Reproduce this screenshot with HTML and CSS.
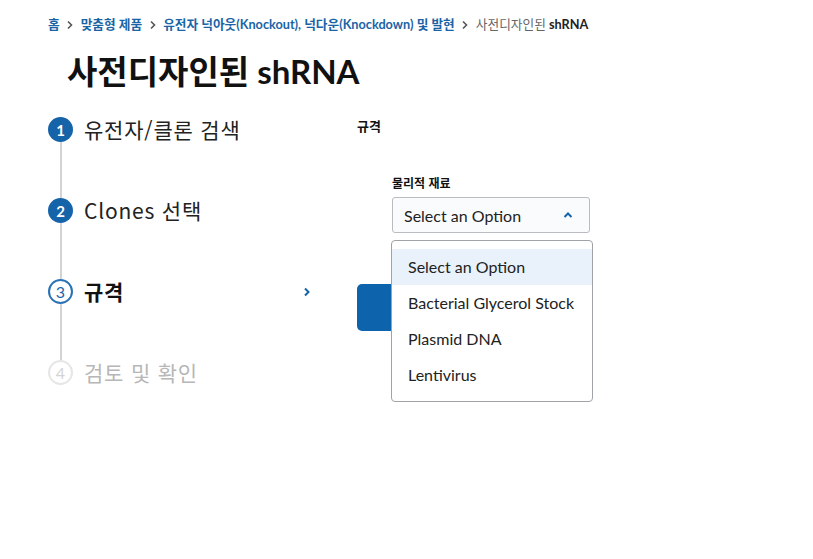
FILE: index.html
```html
<!DOCTYPE html>
<html lang="ko">
<head>
<meta charset="utf-8">
<title>사전디자인된 shRNA</title>
<link rel="stylesheet" href="styles.css">
</head>
<body>
<div class="page">
  <nav class="crumbs">
    <a class="crumb">홈</a><span class="sep"><svg width="8" height="10" viewBox="0 0 8 10"><path d="M2 1.5 L5.5 5 L2 8.5" fill="none" stroke="#555" stroke-width="1.6"/></svg></span>
    <a class="crumb">맞춤형 제품</a><span class="sep"><svg width="8" height="10" viewBox="0 0 8 10"><path d="M2 1.5 L5.5 5 L2 8.5" fill="none" stroke="#555" stroke-width="1.6"/></svg></span>
    <a class="crumb">유전자 넉아웃(Knockout), 넉다운(Knockdown) 및 발현</a><span class="sep"><svg width="8" height="10" viewBox="0 0 8 10"><path d="M2 1.5 L5.5 5 L2 8.5" fill="none" stroke="#555" stroke-width="1.6"/></svg></span>
    <span class="crumb current"><span class="ko-light">사전디자인된</span> shRNA</span>
  </nav>
  <h1 class="title">사전디자인된 shRNA</h1>
  <div class="main">
    <ol class="steps">
      <li class="step done"><span class="num">1</span><span class="label">유전자/클론 검색</span></li>
      <li class="step done"><span class="num">2</span><span class="label">Clones 선택</span></li>
      <li class="step active"><span class="num">3</span><span class="label">규격</span>
        <svg class="step-arrow" width="8" height="12" viewBox="0 0 8 12"><path d="M2 2.5 L5.5 6 L2 9.5" fill="none" stroke="#1565a8" stroke-width="2"/></svg>
      </li>
      <li class="step todo"><span class="num">4</span><span class="label">검토 및 확인</span></li>
    </ol>
    <section class="content">
      <h2 class="section-title">규격</h2>
      <div class="field">
        <div class="field-label">물리적 재료</div>
        <div class="select">
          <span>Select an Option</span>
          <svg width="10" height="8" viewBox="0 0 10 8"><path d="M1.5 6 L5 2.5 L8.5 6" fill="none" stroke="#1565a8" stroke-width="2"/></svg>
          <ul class="menu">
            <li class="opt hl">Select an Option</li>
            <li class="opt">Bacterial Glycerol Stock</li>
            <li class="opt">Plasmid DNA</li>
            <li class="opt">Lentivirus</li>
          </ul>
        </div>
      </div>
      <div class="btn"></div>
    </section>
  </div>
</div>
</body>
</html>
```
FILE: styles.css
```css
* { box-sizing: border-box; }
html, body { margin: 0; padding: 0; background: #fff; }
body {
  font-family: "Lato", "Noto Sans CJK KR", sans-serif;
  color: #222;
  width: 813px;
  height: 559px;
  overflow: hidden;
}
.page { padding: 16px 0 0 48px; }
.crumbs {
  display: flex;
  align-items: center;
  font-size: 12.7px;
  font-weight: 700;
  height: 17px;
  line-height: 17px;
  white-space: nowrap;
}
.crumb { color: #1a64a6; text-decoration: none; }
.crumb.current { color: #222; }
.ko-light { color: #666; font-weight: 400; }
.sep { display: inline-flex; width: 21px; justify-content: center; align-items: center; }
.title {
  margin: 20px 0 0 19px;
  font-size: 33px;
  font-weight: 700;
  line-height: 36px;
  color: #111;
  letter-spacing: 0;
}
.main { display: flex; margin-top: 28px; }
.steps {
  list-style: none;
  margin: 0;
  padding: 0;
  width: 309px;
  flex: none;
}
.step {
  position: relative;
  display: flex;
  height: 81px;
  align-items: flex-start;
}
.step .num {
  width: 25px;
  height: 25px;
  border-radius: 50%;
  display: flex;
  align-items: center;
  justify-content: center;
  font-size: 15px;
  font-weight: 700;
  flex: none;
  position: relative;
  z-index: 1;
}
.step::before {
  content: "";
  position: absolute;
  left: 12px;
  top: 25px;
  width: 2px;
  height: 56px;
  background: #d3d3d3;
}
.step:last-child::before { display: none; }
.step .label {
  margin-left: 11px;
  font-family: "Noto Sans CJK KR", "Lato", sans-serif;
  font-size: 21px;
  line-height: 25px;
  letter-spacing: 0.8px;
  color: #222;
}
.step.done .num { background: #1563a8; color: #fff; }
.step.active .num { background: #fff; border: 2px solid #2a72b5; color: #1f66a8; font-weight: 400; font-size: 16px; }
.step.active .label { font-weight: 700; color: #111; }
.step.todo .num { background: #fff; border: 2px solid #e6e6e6; color: #d4d4d4; font-weight: 400; font-size: 16px; }
.step.todo .label { color: #b7b7b7; }
.step-arrow { position: absolute; left: 255px; top: 7px; }
.content { position: relative; width: 260px; }
.section-title {
  margin: 0;
  font-family: "Noto Sans CJK KR", sans-serif;
  font-size: 13px;
  font-weight: 700;
  line-height: 18px;
  color: #111;
}
.field { margin: 40px 0 0 35px; }
.field-label {
  font-family: "Noto Sans CJK KR", sans-serif;
  font-size: 12px;
  font-weight: 700;
  line-height: 16px;
  color: #111;
}
.select {
  position: relative;
  margin-top: 6px;
  width: 198px;
  height: 36px;
  border: 1px solid #b9bcc0;
  border-radius: 3px;
  background: #fafbfc;
  display: flex;
  align-items: center;
  justify-content: space-between;
  padding: 0 16px 0 11px;
  font-size: 16px;
  color: #222;
}
.menu {
  position: absolute;
  left: -2px;
  top: 42px;
  width: 202px;
  margin: 0;
  padding: 8px 0;
  list-style: none;
  background: #fff;
  border: 1px solid #9fa3a8;
  border-radius: 4px;
  z-index: 5;
}
.opt {
  height: 36px;
  line-height: 36px;
  padding-left: 16px;
  font-size: 16px;
  color: #222;
}
.opt.hl { background: #e9f2fa; }
.btn {
  margin-top: 51px;
  width: 200px;
  height: 47px;
  background: #0e63ad;
  border-radius: 5px;
}
```
